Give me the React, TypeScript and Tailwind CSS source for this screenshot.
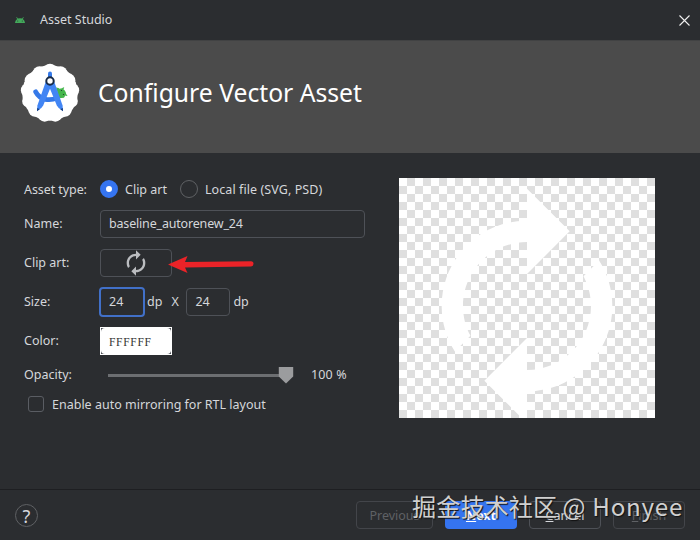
import React, { useState } from 'react';

const AUTORENEW_PATH =
  'M12 6v3l4-4-4-4v3c-4.42 0-8 3.58-8 8 0 1.57.46 3.03 1.24 4.26L6.7 14.8c-.45-.83-.7-1.79-.7-2.8 0-3.31 2.69-6 6-6zm6.76 1.74L17.3 9.2c.44.84.7 1.79.7 2.8 0 3.31-2.69 6-6 6v-3l-4 4 4 4v-3c4.42 0 8-3.58 8-8 0-1.57-.46-3.03-1.24-4.26z';

function AndroidIcon() {
  return (
    <svg className="w-[10px] h-[6px]" viewBox="0 0 20 12">
      <path d="M0 12C.3 8 2.300 5.500 4.500 4L2.500.8 3.500 0l2.300 3.200a11 11 0 0 1 8.400 0L16.500 0l1 .8-2 3.200C17.700 5.500 19.700 8 20 12z" fill="#43a95b" />
      <circle cx="5.500" cy="8" r="1" fill="#2b2d30" />
      <circle cx="14.500" cy="8" r="1" fill="#2b2d30" />
    </svg>
  );
}

function StudioLogo() {
  const bumps = Array.from({ length: 13 }, (_, i) => {
    const angle = (i * 2 * Math.PI) / 13 - Math.PI / 2;
    return { x: 30 + 22.3 * Math.cos(angle), y: 30 + 22.3 * Math.sin(angle) };
  });
  return (
    <svg className="w-[60px] h-[60px]" viewBox="0 0 60 60">
      <circle cx="30" cy="30" r="27.800" fill="#fff" />
      {bumps.map((b, i) => (
        <circle key={i} cx={b.x} cy={b.y} r="7" fill="#fff" />
      ))}
      {/* Android head */}
      <path d="M36 24.500l2.500.5 1 .8 2.500-.6 1.500-1 .8.6-.9 1.400c1.700 1.200 2.700 3 2.800 5l1.200 1-.4.9-1.700-.5-1.300 2.200-5 .5z" fill="#45b64c" />
      <circle cx="41.500" cy="27.500" r=".6" fill="#1d3b2a" />
      <circle cx="43.500" cy="31.500" r=".6" fill="#1d3b2a" />
      {/* Compass */}
      <path d="M15.700 28.800c4.500 8.500 14 9.500 21.500 6" fill="none" stroke="#3579e8" strokeWidth="4.800" strokeLinecap="round" />
      <path d="M28 10.500a2 2 0 0 1 4 0V16h-4z" fill="#3579e8" />
      <path d="M26 18h5.500v4l-8.300 20.500-1.900 2.500-4.300 3 .4-5.500z" fill="#4285f4" />
      <path d="M34 18h-5.500v4l8.300 20.500 1.900 2.500 4.300 3-.4-5.500z" fill="#4285f4" />
      <path d="M17.200 45l-.2 3.300 2.800-2zM42.800 45l.2 3.300-2.800-2z" fill="#143e80" />
      <circle cx="30" cy="18" r="3.700" fill="#fff" stroke="#172a46" strokeWidth="2" />
    </svg>
  );
}

function Label({ children }: { children: React.ReactNode }) {
  return <div className="w-[76px] shrink-0">{children}</div>;
}

export default function App() {
  const [assetType, setAssetType] = useState<'clip' | 'file'>('clip');
  const [name, setName] = useState('baseline_autorenew_24');
  const [width, setWidth] = useState('24');
  const [height, setHeight] = useState('24');
  const [mirroring, setMirroring] = useState(false);

  const radioClass = (active: boolean) =>
    active
      ? 'w-[18px] h-[18px] rounded-full bg-white border-[6px] border-[#3574f0]'
      : 'w-[18px] h-[18px] rounded-full border border-[#5f6164]';

  return (
    <div className="relative w-[700px] h-[540px] overflow-hidden flex flex-col bg-[#2b2d30] text-[#d5d7db] font-['Noto_Sans','Noto_Sans_CJK_SC',sans-serif] text-[12.5px] leading-4">
      {/* Title bar */}
      <div className="h-10 shrink-0 flex items-center pl-[15px] pr-[10px]">
        <AndroidIcon />
        <span className="ml-[15px] flex-1">Asset Studio</span>
        <svg className="w-[11px] h-[11px]" viewBox="0 0 11 11">
          <path d="M.5.5l10 10M10.500.5l-10 10" stroke="#f0f0f0" strokeWidth="1.100" />
        </svg>
      </div>

      {/* Header */}
      <div className="h-[113px] shrink-0 flex items-center pl-5 pb-2 bg-[#4b4b4b] border-t border-[#414243]">
        <StudioLogo />
        <h1 className="ml-[18px] pb-px text-[24.7px] leading-8 text-white whitespace-nowrap">Configure Vector Asset</h1>
      </div>

      {/* Form */}
      <div className="flex-1 flex pl-6">
        <div className="w-[375px] pt-[26px]">
          <div className="flex items-center h-5">
            <Label>
              <span className="block pt-[2px] tracking-[-0.08px]">Asset type:</span>
            </Label>
            <button onClick={() => setAssetType('clip')} className="flex items-center gap-[7px]">
              <span className={radioClass(assetType === 'clip')} />
              <span className="pt-[2px]">Clip art</span>
            </button>
            <button onClick={() => setAssetType('file')} className="flex items-center gap-[7px] ml-[13px] tracking-[0.08px]">
              <span className={radioClass(assetType === 'file')} />
              <span className="pt-[2px]">Local file (SVG, PSD)</span>
            </button>
          </div>

          <div className="flex items-center h-7 mt-[11px]">
            <Label>Name:</Label>
            <input
              value={name}
              onChange={(e) => setName(e.target.value)}
              className="w-[265px] h-7 px-2 pb-px rounded border border-[#4e5157] tracking-[-0.18px] outline-none"
            />
          </div>

          <div className="flex items-center h-7 mt-[11px]">
            <Label>Clip art:</Label>
            <button className="w-[72px] h-7 flex items-center justify-center rounded border border-[#4e5157]">
              <svg className="w-[28px] h-[28px] shrink-0" viewBox="0 0 24 24">
                <path d={AUTORENEW_PATH} fill="#bbbdc0" />
              </svg>
            </button>
          </div>

          <div className="flex items-center h-7 mt-[11px]">
            <Label>Size:</Label>
            <input
              value={width}
              onChange={(e) => setWidth(e.target.value)}
              className="-ml-px w-[46px] h-[30px] px-2 pb-px rounded border-2 border-[#4170c8] outline-none"
            />
            <span className="ml-[2px]">dp</span>
            <span className="ml-[9px] w-[15px]">X</span>
            <input
              value={height}
              onChange={(e) => setHeight(e.target.value)}
              className="w-11 h-7 px-2 pb-px rounded border border-[#4e5157] outline-none"
            />
            <span className="ml-[3px]">dp</span>
          </div>

          <div className="flex items-center h-7 mt-[11px]">
            <Label>Color:</Label>
            <div className="w-[72px] h-7 bg-[#4e5157] border border-white">
              <div className="h-full flex items-center pt-px pl-2 rounded bg-white text-[#333] font-['Liberation_Serif',serif] text-[11.5px] tracking-[0.7px]">
                FFFFFF
              </div>
            </div>
          </div>

          <div className="flex items-center h-5 mt-[10px]">
            <Label>Opacity:</Label>
            <div className="ml-2 w-[178px] h-[3px] bg-[#6c6e71]" />
            <svg className="-ml-[8px] w-4 h-[18px]" viewBox="0 0 16 18">
              <path d="M.8 1h14.400v9.500L8 17.500.8 10.500z" fill="#9b9c9e" />
            </svg>
            <span className="ml-[17px] tracking-[0.15px]">100 %</span>
          </div>

          <label className="flex items-center h-5 mt-[9px] ml-1">
            <input
              type="checkbox"
              checked={mirroring}
              onChange={(e) => setMirroring(e.target.checked)}
              className="appearance-none w-4 h-4 rounded-[3px] border border-[#5a5d63]"
            />
            <span className="ml-2 pt-px whitespace-nowrap">Enable auto mirroring for RTL layout</span>
          </label>
        </div>

        {/* Preview */}
        <div className="mt-[25px] w-64 h-60 overflow-hidden bg-[repeating-conic-gradient(#dfdfdf_0_25%,#fff_0_50%)] bg-[length:16px_16px]">
          <svg className="w-64 h-64" viewBox="0 0 24 24">
            <path d={AUTORENEW_PATH} fill="#fff" />
          </svg>
        </div>
      </div>

      {/* Footer */}
      <div className="h-[51px] shrink-0 flex items-start pt-[11px] pl-[15px] border-t border-[#1e1f22]">
        <button className="mt-[3px] w-[23px] h-[23px] rounded-full border border-[#5f6164] text-[18px] leading-5 flex items-center justify-center">
          ?
        </button>
        <div className="flex gap-3 ml-[318px]">
          <button className="w-[77px] h-7 pt-[2px] rounded border border-[#43454a] text-[#5f6165]">Previous</button>
          <button className="w-[72px] h-7 pt-[2px] rounded bg-[#3574f0] text-white font-bold">
            <span className="underline">N</span>ext
          </button>
          <button className="w-[72px] h-7 pt-[2px] rounded border border-[#4e5157]">
            <span className="underline">C</span>ancel
          </button>
          <button className="w-[72px] h-7 pt-[2px] rounded border border-[#43454a] text-[#5f6165]">
            <span className="underline">F</span>inish
          </button>
        </div>
      </div>

      {/* Callout arrow */}
      <svg className="absolute left-[168px] top-[254px] w-[88px] h-5" viewBox="0 0 88 20">
        <path d="M0 10.500L19.500 2l-2.500 6L83 7.200q2.500 0 2.500 2.500T83 12.400l-66 1.100 2.500 5.500z" fill="#eb2328" />
      </svg>

      {/* Watermark */}
      <div className="absolute left-[412px] top-[490px] text-[24.200px] leading-8 whitespace-nowrap text-[#d0d0d0] font-['Noto_Sans_CJK_SC',sans-serif] [text-shadow:1px_1px_1px_#111]">
        掘金技术社区 <span className="tracking-[0.75px]">@ Honyee</span>
      </div>
    </div>
  );
}
